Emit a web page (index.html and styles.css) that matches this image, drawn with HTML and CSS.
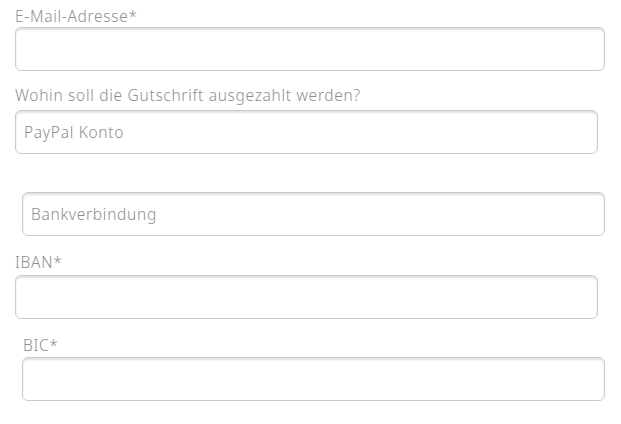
FILE: index.html
```html
<!DOCTYPE html>
<html lang="de">
<head>
  <meta charset="UTF-8">
  <meta name="viewport" content="width=device-width, initial-scale=1.0">
  <title>Auszahlung</title>
  <link rel="stylesheet" href="styles.css">
</head>
<body>

  <form class="form">
    <div class="field field-email">
      <label for="email">E-Mail-Adresse*</label>
      <input type="email" id="email">
    </div>

    <div class="field field-payout narrow-right">
      <label for="paypal">Wohin soll die Gutschrift ausgezahlt werden?</label>
      <input type="text" id="paypal" placeholder="PayPal Konto">
    </div>

    <div class="field field-bank narrow-left">
      <input type="text" id="bank" placeholder="Bankverbindung">
    </div>

    <div class="field field-iban narrow-right">
      <label for="iban">IBAN*</label>
      <input type="text" id="iban">
    </div>

    <div class="field field-bic narrow-left">
      <label for="bic">BIC*</label>
      <input type="text" id="bic">
    </div>
  </form>

</body>
</html>
```

FILE: styles.css
```css
body {
  font-family: "Noto Sans", Arial, sans-serif;
  font-size: 15.5px;
  font-weight: 300;
  letter-spacing: 0.7px;
  color: #8e8e8e;
  background-color: #fff;
  margin: 0;
}

.form {
  display: flex;
  flex-direction: column;
  padding: 6px 16px 0 15px;
}

.field {
  display: flex;
  flex-direction: column;
}

.field label {
  line-height: 20px;
  margin-bottom: 1px;
}

.narrow-right {
  margin-right: 7px;
}

.narrow-left {
  margin-left: 7px;
}

input {
  height: 44px;
  padding: 0 8px;
  font-family: inherit;
  font-size: 15.5px;
  font-weight: 300;
  letter-spacing: 0.7px;
  color: #555;
  background-color: #fff;
  border: 1px solid #cbcbcb;
  border-radius: 6px;
  box-shadow: inset 0 2px 2px rgba(0, 0, 0, 0.12);
  box-sizing: border-box;
  outline: none;
}

input::placeholder {
  color: #8e8e8e;
}

.field-payout {
  margin-top: 14px;
}

.field-payout label {
  margin-bottom: 5px;
}

.field-bank {
  margin-top: 38px;
}

.field-iban {
  margin-top: 16px;
}

.field-iban label {
  margin-bottom: 3px;
}

.field-bic {
  margin-top: 16px;
}

.field-bic label {
  margin-bottom: 2px;
  padding-left: 1px;
}
```
